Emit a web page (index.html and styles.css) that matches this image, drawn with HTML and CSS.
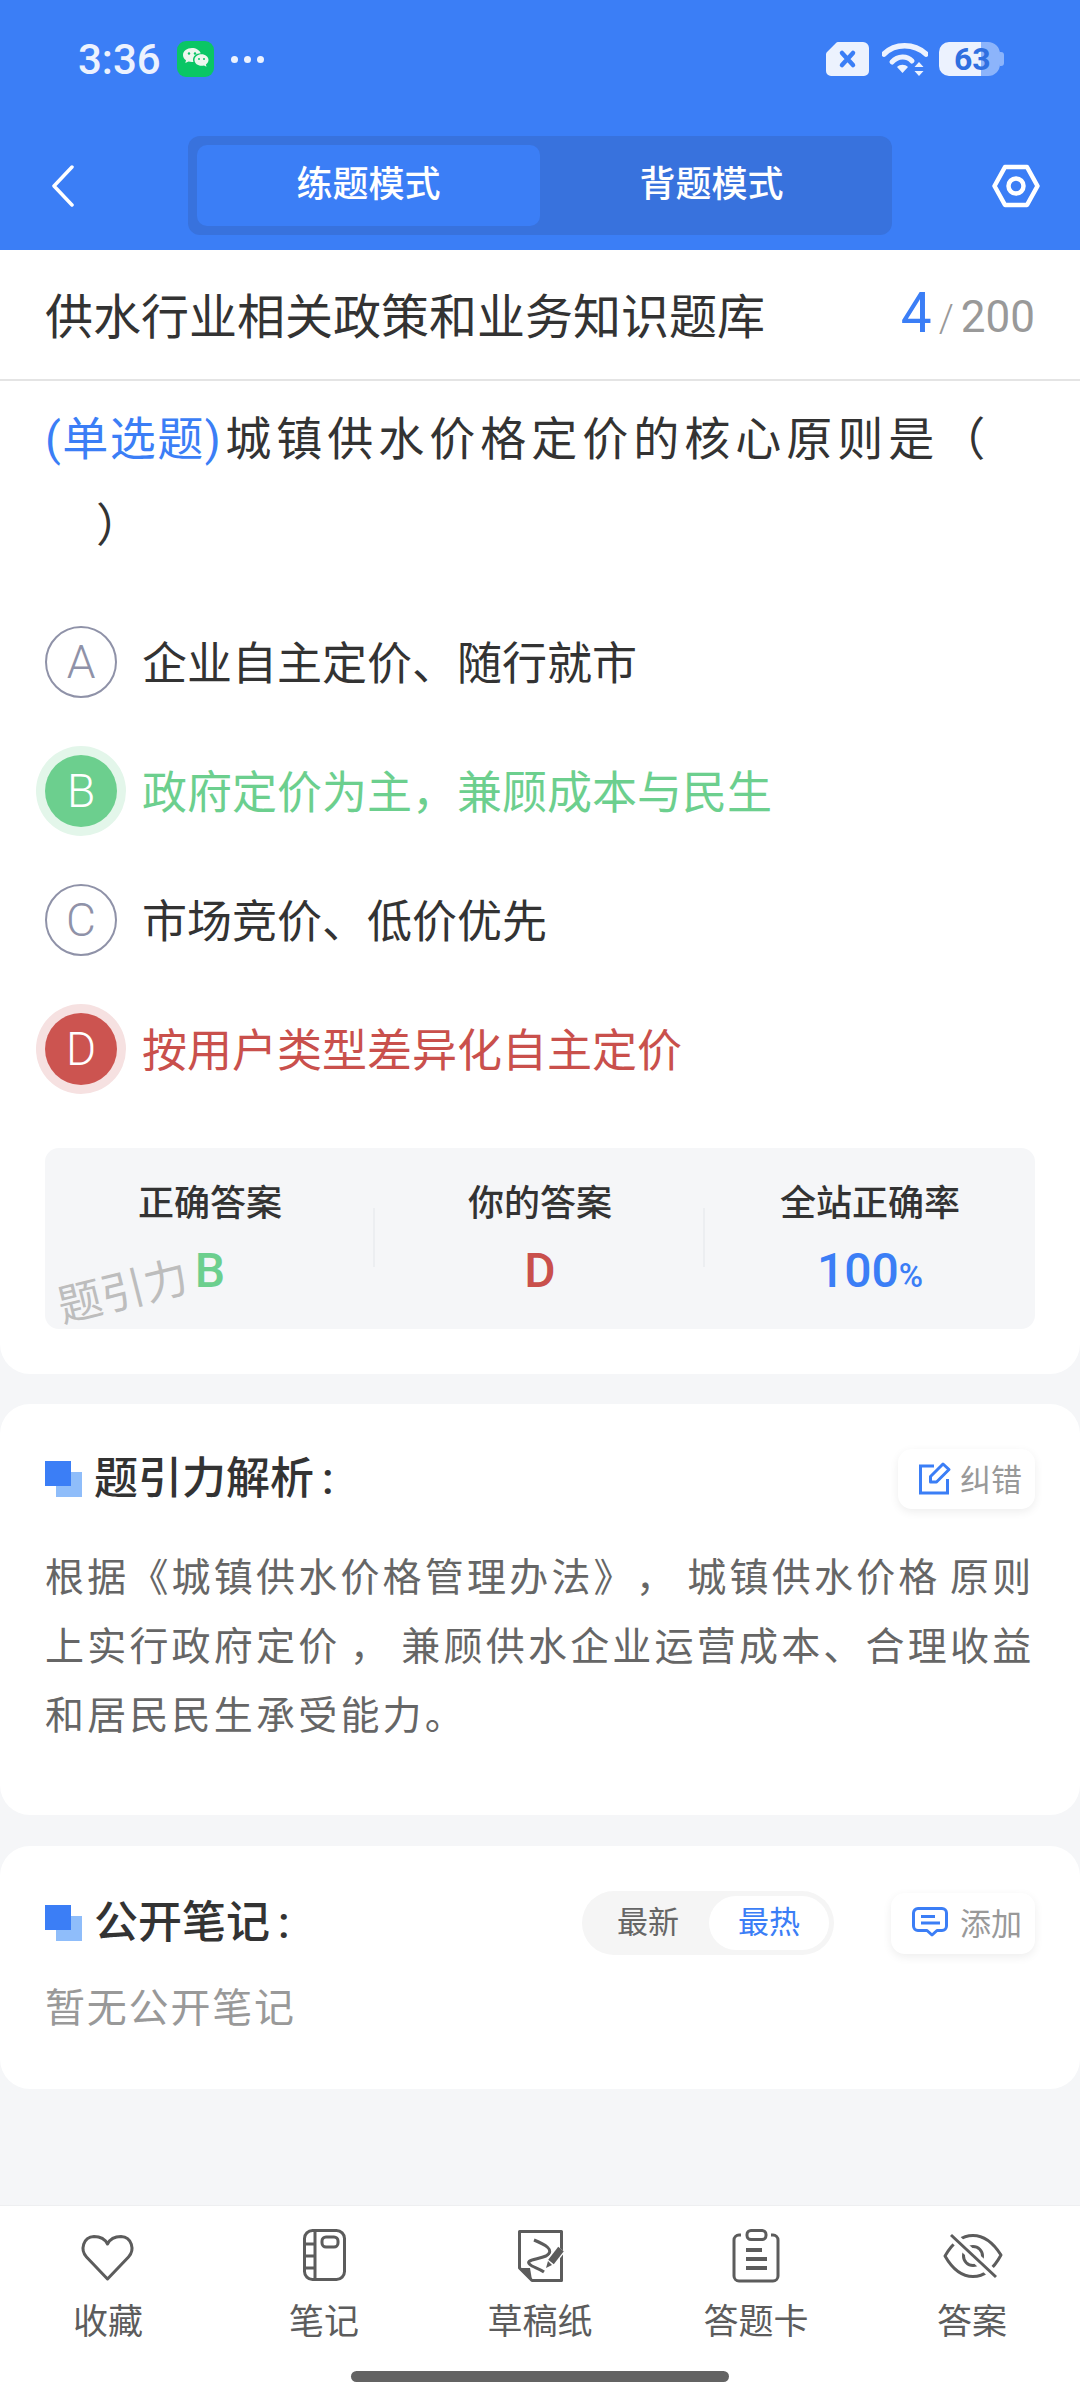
FILE: index.html
```html
<!doctype html>
<html lang="zh-CN">
	<head>
		<meta charset="utf-8">
		<title>练题模式</title>
		<link rel="stylesheet" href="styles.css">
	</head>
	<body>
		<div id="head">
			<div class="status">
				<span class="time">3:36</span>
				<svg class="wechat" viewBox="0 0 37 36">
					<rect width="37" height="36" rx="9" fill="#0ac665"/>
					<path d="M15 7c-5 0-9 3-9 7 0 2.200 1.100 4 3 5.300L8.300 22l3.200-1.500c1 .3 2.200.5 3.500.5.500 0 1 0 1.400-.1-.3-.8-.4-1.500-.4-2.200 0-3.700 3.400-6.400 7.700-6.500C22.500 9 19 7 15 7z" fill="#eef7ee"/>
					<path d="M31.500 19c0-3.300-3.200-5.800-7-5.800s-7 2.500-7 5.800 3.200 5.800 7 5.800c.9 0 1.700-.1 2.500-.4l2.500 1.400-.6-2.400c1.600-1 2.600-2.600 2.600-4.400z" fill="#eef7ee"/>
					<circle cx="12" cy="12.500" r="1.200" fill="#0ac665"/><circle cx="18" cy="12.500" r="1.200" fill="#0ac665"/>
					<circle cx="22" cy="18" r="1" fill="#0ac665"/><circle cx="27" cy="18" r="1" fill="#0ac665"/>
				</svg>
				<span class="dots"><i></i><i></i><i></i></span>
				<span class="status-right">
					<svg class="sim" viewBox="0 0 43 34">
						<path d="M12 0H37a6 6 0 0 1 6 6V29a5 5 0 0 1-5 5H5a5 5 0 0 1-5-5V13a4 4 0 0 1 1-3L10 1a3 3 0 0 1 2-1z" fill="#ecf2fe"/>
						<path d="M16 11l11 12M27 11L16 23" stroke="#3a7ef6" stroke-width="4.500" stroke-linecap="round"/>
					</svg>
					<svg class="wifi" viewBox="0 0 46 34">
						<path d="M2 12C13 1 32 1 44 12" fill="none" stroke="#ecf2fe" stroke-width="5.500" stroke-linecap="round"/>
						<path d="M10 20c6-6.500 15-6.500 20-1" fill="none" stroke="#ecf2fe" stroke-width="5" stroke-linecap="round"/>
						<path d="M15 25c3-3 8-3 11 0l-5.500 6z" fill="#ecf2fe"/>
						<path d="M37 20l4.500 5h-9zM37 34l-4.500-5h9z" fill="#ecf2fe"/>
					</svg>
					<span class="battery"><b>63</b></span>
				</span>
			</div>
			<div class="nav">
				<svg class="back" viewBox="0 0 24 42"><path d="M21 2L3 21l18 19" fill="none" stroke="#fff" stroke-width="3.500" stroke-linecap="round" stroke-linejoin="round"/></svg>
				<div class="mode">
					<span class="mode-item active">练题模式</span>
					<span class="mode-item">背题模式</span>
				</div>
				<svg class="gear" viewBox="0 0 48 44">
					<path d="M2.500 22L13 3h22l10.500 19L35 41H13z" fill="none" stroke="#fff" stroke-width="4.500" stroke-linejoin="round"/>
					<circle cx="24" cy="22" r="7.500" fill="none" stroke="#fff" stroke-width="4.500"/>
				</svg>
			</div>
		</div>

		<div class="card first">
			<div class="title-row">
				<span class="book">供水行业相关政策和业务知识题库</span>
				<span class="count"><em>4</em><i>/</i>200</span>
			</div>
			<div class="question"><span class="qtype">(单选题)</span>城镇供水价格定价的核心原则是（<br>　）</div>
			<div class="option"><span class="letter">A</span><span class="opt-text">企业自主定价、随行就市</span></div>
			<div class="option right"><span class="letter">B</span><span class="opt-text">政府定价为主，兼顾成本与民生</span></div>
			<div class="option"><span class="letter">C</span><span class="opt-text">市场竞价、低价优先</span></div>
			<div class="option wrong"><span class="letter">D</span><span class="opt-text">按用户类型差异化自主定价</span></div>
			<div class="stats">
				<div class="stat"><p>正确答案</p><strong class="green">B</strong></div>
				<div class="stat"><p>你的答案</p><strong class="red">D</strong></div>
				<div class="stat"><p>全站正确率</p><strong class="blue">100<small>%</small></strong></div>
				<span class="watermark">题引力</span>
			</div>
		</div>

		<div class="card analysis">
			<div class="card-head">
				<span class="mark"></span>
				<h2>题引力解析<span class="colon">:</span></h2>
				<span class="small-btn">
					<svg viewBox="0 0 34 34" width="34" height="34">
						<path d="M16 5H2.500V32H29.500V18" fill="none" stroke="#3b7ef6" stroke-width="3"/>
						<path d="M12.500 15.500L25 3l6 5.500L18.500 21H12.500z" fill="none" stroke="#3b7ef6" stroke-width="3" stroke-linejoin="round"/>
					</svg>
					纠错
				</span>
			</div>
			<p class="analysis-text">根据《城镇供水价格管理办法》， 城镇供水价格 原则上实行政府定价 ， 兼顾供水企业运营成本、合理收益和居民民生承受能力。</p>
		</div>

		<div class="card notes">
			<div class="card-head">
				<span class="mark"></span>
				<h2>公开笔记<span class="colon">:</span></h2>
				<span class="sort"><span>最新</span><span class="on">最热</span></span>
				<span class="small-btn add">
					<svg viewBox="0 0 36 30" width="36" height="30">
						<path d="M6 1.500H30a4.500 4.500 0 0 1 4.500 4.500V19a4.500 4.500 0 0 1-4.500 4.500H25L20 28l-5-4.500H6A4.500 4.500 0 0 1 1.500 19V6A4.500 4.500 0 0 1 6 1.500z" fill="none" stroke="#3b7ef6" stroke-width="3" stroke-linejoin="round"/>
						<path d="M9 9.500H23M9 16H28" stroke="#3b7ef6" stroke-width="3"/>
					</svg>
					添加
				</span>
			</div>
			<p class="empty">暂无公开笔记</p>
		</div>

		<div id="tabbar">
			<div class="tab">
				<svg viewBox="0 0 60 60"><path d="M29.500 53L8.500 31C2 24 5 11 16 10.500c6 0 11 2.500 13.500 7.500C32 13 37 10.500 43 10.500 54 11 57 24 50.500 31z"/></svg>
				收藏
			</div>
			<div class="tab">
				<svg viewBox="0 0 60 60">
					<rect x="10.500" y="4.500" width="40" height="49" rx="8"/>
					<rect x="28" y="11" width="16" height="10" rx="4"/>
					<path d="M21 4.500V53.500M10.500 18H21M10.500 30H21M10.500 42H21"/>
				</svg>
				笔记
			</div>
			<div class="tab">
				<svg viewBox="0 0 60 60">
					<path d="M9.500 5.500H51.500V54.500H22L9.500 42z"/>
					<path d="M10 42H20L22 54z" class="solid"/>
					<path d="M24 14C34 18 46 24 36 30 26 34 12 34 22 40 26 42 30 43 34 46"/>
					<path d="M51 23L40 37" class="erase"/>
					<path d="M51 23L41 36" class="pencil"/>
					<path d="M38 35l4 4-6 3z" class="solid"/>
				</svg>
				草稿纸
			</div>
			<div class="tab">
				<svg viewBox="0 0 60 60">
					<path d="M15 9H13a5 5 0 0 0-5 5V50a5 5 0 0 0 5 5H47a5 5 0 0 0 5-5V14a5 5 0 0 0-5-5H45"/>
					<rect x="21" y="4.500" width="19" height="9" rx="4"/>
					<path d="M20 24H36M20 33H41M20 42H41" class="thick"/>
				</svg>
				答题卡
			</div>
			<div class="tab">
				<svg viewBox="0 0 60 60">
					<path d="M3 30C11 16 20 9.500 31 9.500 43 9.500 52 18 59 29 52 42 43 50.500 31 50.500 20 50.500 11 44 3 30z"/>
					<circle cx="31" cy="30" r="9.500"/>
					<path d="M9 9L54 51" class="erase"/>
					<path d="M9 9L54 51"/>
				</svg>
				答案
			</div>
		</div>
		<div class="home-bar"></div>
	</body>
</html>
```

FILE: styles.css
```css
html, body {
	margin: 0;
	padding: 0;
}
body {
	position: relative;
	display: flex;
	flex-direction: column;
	width: 1080px;
	height: 2400px;
	overflow: hidden;
	background-color: #f5f6f8;
	color: #333;
	font-family: Roboto, "Noto Sans CJK SC", sans-serif;
	text-spacing-trim: space-all;
}
p, h2 {
	margin: 0;
}

#head {
	height: 250px;
	box-sizing: border-box;
	padding-top: 41px;
	background-color: #3b7ef6;
}
.status {
	display: flex;
	align-items: center;
	height: 36px;
	padding: 0 76px 0 78px;
	color: #ecf2fe;
}
.time {
	font-size: 42px;
	font-weight: 500;
	width: 99px;
}
.wechat {
	width: 37px;
	height: 36px;
}
.dots {
	display: flex;
	gap: 6px;
	margin-left: 17px;
}
.dots i {
	width: 7px;
	height: 7px;
	border-radius: 50%;
	background-color: #ecf2fe;
}
.status-right {
	display: flex;
	align-items: center;
	margin-left: auto;
}
.sim {
	width: 43px;
	height: 34px;
	margin-right: 13px;
}
.wifi {
	width: 46px;
	height: 34px;
	margin-right: 11px;
}
.battery {
	position: relative;
	display: block;
	width: 61px;
	height: 34px;
	margin-right: 4px;
	border-radius: 10px 12px 12px 10px;
	background: linear-gradient(90deg, #ecf2fe 42px, #8cb4fb 42px);
	color: #2f6fe0;
	font-size: 32px;
	line-height: 34px;
	text-indent: 15px;
}
.battery::after {
	content: "";
	position: absolute;
	right: -4px;
	top: 10px;
	width: 4px;
	height: 14px;
	border-radius: 0 3px 3px 0;
	background-color: #8cb4fb;
}
.battery b {
	font-weight: 700;
}

.nav {
	display: grid;
	grid-template-columns: 188px 704px 1fr;
	align-items: center;
	height: 99px;
	margin-top: 59px;
}
.back {
	width: 24px;
	height: 42px;
	margin-left: 51px;
}
.mode {
	display: flex;
	height: 99px;
	box-sizing: border-box;
	padding: 9px;
	border-radius: 12px;
	background-color: #3872dd;
}
.mode-item {
	flex: 1;
	border-radius: 10px;
	color: #fff;
	font-size: 36px;
	font-weight: 500;
	line-height: 81px;
	text-align: center;
}
.mode-item.active {
	background-color: #3b7ef6;
}
.gear {
	width: 48px;
	height: 44px;
	margin-left: 100px;
}

.card {
	box-sizing: border-box;
	padding: 45px 45px 0;
	border-radius: 30px;
	background-color: #fff;
}
.card.first {
	height: 1124px;
	margin-bottom: 30px;
	padding-top: 0;
	border-radius: 0 0 30px 30px;
}
.title-row {
	display: flex;
	align-items: center;
	justify-content: space-between;
	height: 131px;
	box-sizing: border-box;
	margin: 0 -45px;
	padding: 0 45px 3px;
	border-bottom: 2px solid #e4e4e4;
}
.book {
	font-size: 48px;
	color: #333;
}
.count {
	color: #999;
	font-size: 44px;
}
.count em {
	color: #3b7ef6;
	font-size: 55px;
	font-style: normal;
}
.count i {
	margin: 0 7px;
	font-size: 38px;
	font-style: normal;
	font-weight: 300;
}
.question {
	margin-top: 15px;
	font-size: 46px;
	line-height: 86px;
	letter-spacing: 5px;
}
.qtype {
	margin-right: 3px;
	color: #3b7ef6;
	letter-spacing: 1.500px;
}
.option {
	display: flex;
	align-items: center;
	height: 129px;
	font-size: 45px;
}
.question + .option {
	margin-top: 29px;
}
.opt-text {
	margin-top: -3px;
}
.letter {
	flex: none;
	width: 72px;
	height: 72px;
	box-sizing: border-box;
	margin-right: 25px;
	border: 2px solid #8f92a8;
	border-radius: 50%;
	color: #8f92a8;
	font-size: 46px;
	font-weight: 300;
	line-height: 68px;
	text-align: center;
}
.right {
	color: #6ccf8e;
}
.wrong {
	color: #c9504c;
}
.right .letter, .wrong .letter {
	border: 0;
	color: #fff;
	line-height: 72px;
}
.right .letter {
	background-color: #6ccf8e;
	box-shadow: 0 0 0 9px #e3f6ea;
}
.wrong .letter {
	background-color: #cc5450;
	box-shadow: 0 0 0 9px #f6e1e1;
}

.stats {
	position: relative;
	display: grid;
	grid-template-columns: repeat(3, 1fr);
	height: 181px;
	margin-top: 35px;
	border-radius: 14px;
	background-color: #f5f6f8;
	text-align: center;
}
.stat {
	position: relative;
	padding-top: 34px;
}
.stat + .stat::before {
	content: "";
	position: absolute;
	left: -2px;
	top: 60px;
	width: 2px;
	height: 59px;
	background-color: #eceef1;
}
.stat p {
	font-size: 36px;
	font-weight: 500;
	line-height: 44px;
}
.stat strong {
	display: block;
	margin-top: 20px;
	font-size: 48px;
	font-weight: 500;
	line-height: 50px;
}
.stat small {
	font-size: 33px;
}
.green {
	color: #6ccf8e;
}
.red {
	color: #c9504c;
}
.blue {
	color: #3b7ef6;
}
.watermark {
	position: absolute;
	left: 12px;
	top: 119px;
	color: #bdbdbd;
	font-size: 44px;
	line-height: 50px;
	transform: rotate(-14deg);
}

.card-head {
	display: flex;
	align-items: center;
}
.mark {
	position: relative;
	flex: none;
	width: 37px;
	height: 36px;
	margin-right: 12px;
}
.mark::before, .mark::after {
	content: "";
	position: absolute;
	width: 26px;
	height: 25px;
}
.mark::before {
	right: 0;
	bottom: 0;
	background-color: #8fbdfa;
}
.mark::after {
	left: 0;
	top: 0;
	background-color: #3b7ef6;
}
.card-head h2 {
	font-size: 44px;
	font-weight: 500;
	line-height: 60px;
	color: #333;
}
.colon {
	margin-left: 8px;
}
.small-btn {
	display: flex;
	align-items: center;
	gap: 8px;
	height: 60px;
	box-sizing: border-box;
	margin-left: auto;
	padding: 0 13px 3px 20px;
	border-radius: 14px;
	background-color: #fff;
	box-shadow: 0 3px 10px rgba(0, 0, 0, 0.07);
	color: #999;
	font-size: 31px;
}
.small-btn svg {
	flex: none;
}
.analysis {
	height: 411px;
	margin-bottom: 31px;
}
.analysis-text {
	margin: 35px -3px 0 0;
	color: #666;
	font-size: 39px;
	line-height: 69px;
	letter-spacing: 3.200px;
	word-spacing: -3.500px;
}
.notes {
	height: 243px;
}
.notes .card-head {
	height: 64px;
}
.sort {
	display: flex;
	align-items: center;
	height: 64px;
	box-sizing: border-box;
	margin-left: auto;
	padding: 0 5px 0 24px;
	border-radius: 32px;
	background-color: #f5f5f5;
	color: #666;
	font-size: 31px;
}
.sort span {
	padding: 0 29px;
	line-height: 54px;
}
.sort span:first-child {
	padding: 0 30px 0 11px;
}
.sort .on {
	border-radius: 27px;
	background-color: #fff;
	color: #3b7ef6;
}
.small-btn.add {
	gap: 12px;
	margin-left: 57px;
	height: 61px;
	padding-left: 21px;
}
.empty {
	margin-top: 24px;
	color: #999;
	font-size: 40px;
	line-height: 60px;
	letter-spacing: 1.800px;
}

#tabbar {
	display: grid;
	grid-template-columns: repeat(5, 216px);
	height: 195px;
	box-sizing: border-box;
	margin-top: auto;
	padding-top: 20px;
	border-top: 1px solid #eeeff1;
	background-color: #fff;
}
.tab {
	display: flex;
	flex-direction: column;
	align-items: center;
	color: #5c5c5c;
	font-size: 35px;
	line-height: 44px;
}
.tab svg {
	width: 60px;
	height: 60px;
	margin-bottom: 15px;
	overflow: visible;
	fill: none;
	stroke: #5c5c5c;
	stroke-width: 3;
	stroke-linejoin: round;
}
.tab .solid {
	fill: #5c5c5c;
	stroke: none;
}
.tab .thick {
	stroke-width: 4;
}
.tab .pencil {
	stroke-width: 7;
}
.tab .erase {
	stroke: #fff;
	stroke-width: 10;
}
.home-bar {
	position: absolute;
	left: 351px;
	top: 2371px;
	width: 378px;
	height: 11px;
	border-radius: 6px;
	background-color: #636363;
}
```
